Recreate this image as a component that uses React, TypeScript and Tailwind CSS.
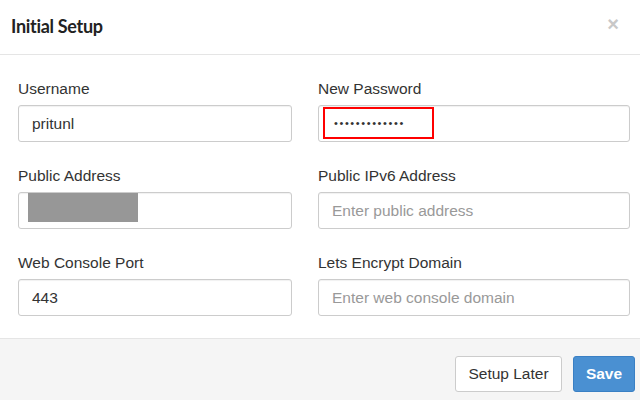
const fields = [
  { label: "Username", value: "pritunl" },
  { label: "New Password", password: true },
  { label: "Public Address", redacted: true },
  { label: "Public IPv6 Address", placeholder: "Enter public address" },
  { label: "Web Console Port", value: "443" },
  { label: "Lets Encrypt Domain", placeholder: "Enter web console domain" },
];

type Field = {
  label: string;
  value?: string;
  placeholder?: string;
  password?: boolean;
  redacted?: boolean;
};

const Input = ({ field }: { field: Field }) => {
  return (
    <div className="relative h-[37px] w-full rounded-[3px] border border-[#cccccc] bg-white shadow-[inset_0_1px_1px_rgba(0,0,0,0.06)] px-[13px] flex items-center text-[15.5px]">
      {field.value && <span className="text-[#333333]">{field.value}</span>}
      {field.placeholder && (
        <span className="text-[#999999]">{field.placeholder}</span>
      )}
      {field.password && (
        <span className="text-[#333333] text-[11px] tracking-[1.6px] pl-[2px]">
          •••••••••••••
        </span>
      )}
      {field.redacted && (
        <div className="absolute left-[9px] top-[0px] h-[29px] w-[110px] bg-[#979797]" />
      )}
      {field.password && (
        <div className="absolute left-[4px] top-[1px] h-[32px] w-[111px] border-2 border-[#ff0000]" />
      )}
    </div>
  );
};

const App = () => {
  return (
    <main
      className="w-[640px] h-[400px] bg-white flex flex-col overflow-hidden"
      style={{ fontFamily: '"Liberation Sans", Arial, sans-serif' }}
    >
      <header className="h-[55px] shrink-0 border-b border-[#e5e5e5] flex items-center justify-between pl-[11px] pr-[21px]">
        <h1
          className="text-[18px] font-bold tracking-[-0.3px] text-[#222222] pb-[1px]"
          style={{ fontFamily: "Lato, sans-serif" }}
        >
          Initial Setup
        </h1>
        <span className="text-[20px] font-bold text-[#c8c8c8] leading-none pb-[6px]">
          ×
        </span>
      </header>
      <section className="flex-1 pl-[18px] pr-[10px] pt-[24px]">
        <div className="grid grid-cols-[274px_312px] gap-x-[26px] gap-y-[24px]">
          {fields.map((field) => (
            <div key={field.label} className="flex flex-col gap-[6px]">
              <label className="h-[20px] leading-[20px] text-[15.5px] text-[#333333]">
                {field.label}
              </label>
              <Input field={field} />
            </div>
          ))}
        </div>
      </section>
      <footer className="h-[62px] shrink-0 border-t border-[#e5e5e5] bg-[#f5f5f5] flex items-start justify-end gap-[11px] pt-[17px] pr-[5px]">
        <button className="h-[36px] w-[107px] rounded-[3px] border border-[#cccccc] bg-white text-[15.5px] text-[#333333]">
          Setup Later
        </button>
        <button className="h-[36px] w-[62px] rounded-[3px] border border-[#3a80c4] bg-[#4a90d2] text-[15.5px] font-bold text-white">
          Save
        </button>
      </footer>
    </main>
  );
};

export default App;
